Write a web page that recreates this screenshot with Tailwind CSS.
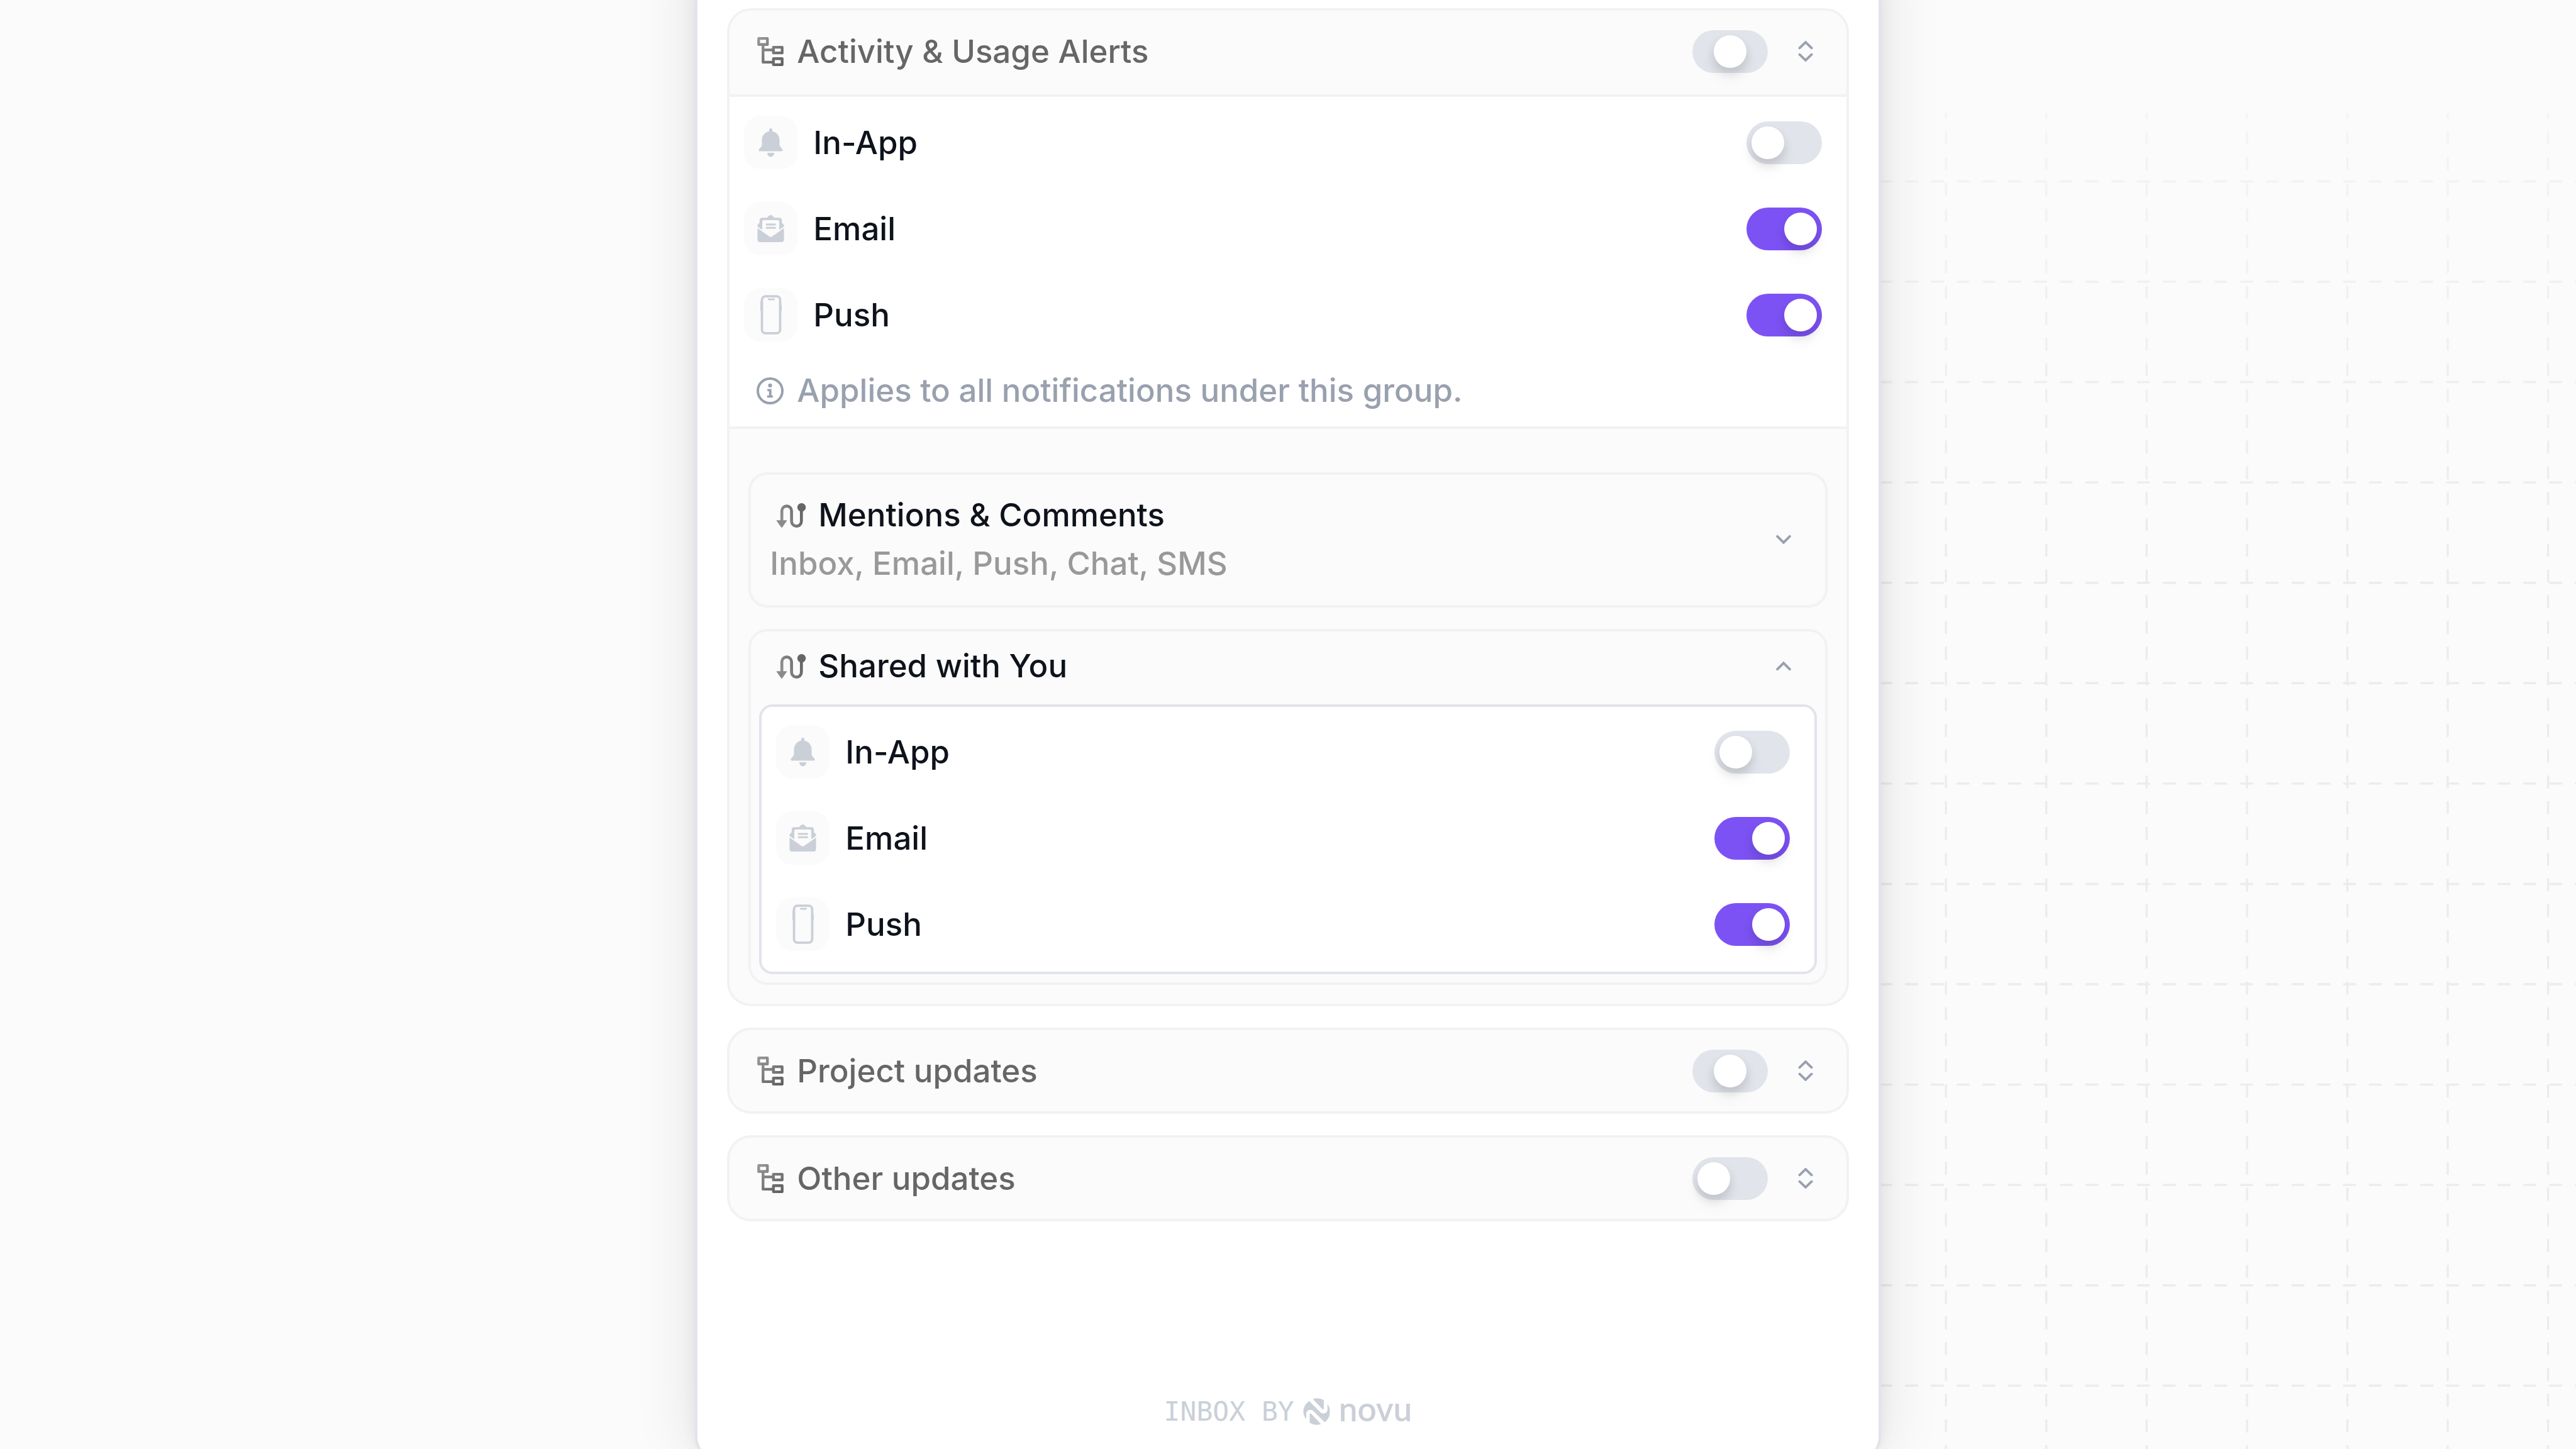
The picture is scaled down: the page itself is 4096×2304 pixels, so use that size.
<!DOCTYPE html>
<html lang="en">
<head>
<meta charset="utf-8">
<meta name="viewport" content="width=device-width, initial-scale=1">
<title>Notification preferences</title>
<script src="https://cdn.jsdelivr.net/npm/@tailwindcss/browser@4"></script>
</head>
<body class="bg-[#fbfbfb]">

<!-- Icon sprite -->
<svg class="absolute size-0" aria-hidden="true">
  <defs>
    <linearGradient id="gray-tree" gradientUnits="userSpaceOnUse" x1="0" y1="0" x2="48" y2="53">
      <stop offset="0" stop-color="#999"/><stop offset="1" stop-color="#5c5c5c"/>
    </linearGradient>
    <linearGradient id="gray-route" gradientUnits="userSpaceOnUse" x1="0" y1="30" x2="56" y2="14">
      <stop offset="0" stop-color="#999"/><stop offset="1" stop-color="#5c5c5c"/>
    </linearGradient>
    <linearGradient id="fade" x1="0" y1="0" x2="0" y2="1">
      <stop offset="0" stop-color="#fff" stop-opacity=".45"/><stop offset=".32" stop-color="#fff"/><stop offset="1" stop-color="#fff"/>
    </linearGradient>
    <mask id="grid-mask" maskUnits="userSpaceOnUse" x="3400" y="210" width="1400" height="2490">
      <rect x="3400" y="210" width="1400" height="2490" fill="url(#fade)"/>
    </mask>
  </defs>
  <symbol id="tree" viewBox="0 0 48 53">
    <g fill="none" stroke="url(#gray-tree)" stroke-width="5" stroke-linejoin="round">
      <path d="M2.500 2.500h16v11h-16zM29.500 18.500h16v10.500h-16zM29.500 39.500h16v11h-16z"/>
      <path d="M10.500 15v31h17M10.500 23.500h17"/>
    </g>
  </symbol>
  <symbol id="route" viewBox="0 0 56 46">
    <path d="M10.500 33V14.500a9.100 9.100 0 0 1 18.200 0V34a9.250 9.250 0 0 0 18.500 0V12" fill="none" stroke="url(#gray-route)" stroke-width="5.500"/>
    <path d="M0 32h20.500L11.500 45q-1.200 1.500-2.400 0z" fill="#8a8a8a"/>
    <circle cx="47.500" cy="8" r="8" fill="#666"/>
  </symbol>
  <symbol id="bell" viewBox="0 0 46 54">
    <path d="M23 0c2 0 3 1.500 3 3v2.500c8 1.500 13.500 8 13.500 16V30c0 3 1.500 5 4.500 8 2.500 2.500 1.500 5-1 5H3c-2.500 0-3.500-2.500-1-5 3-3 4.500-5 4.500-8v-8.500c0-8 5.500-14.500 13.500-16V3c0-1.500 1-3 3-3zM16.500 46h13c0 4.500-3 7.500-6.500 7.500s-6.500-3-6.500-7.500z"/>
  </symbol>
  <symbol id="mail" viewBox="0 0 50 51">
    <path d="M0 24.500 22 40q3 2.500 6 0l22-15.500V46q0 5-5 5H5q-5 0-5-5z"/>
    <path fill-rule="evenodd" d="M25 0c2 0 3 .7 7 5h9q5 0 5 5v4.500l3 3q2 2.500 0 5L41 28V12q0-2.500-2.500-2.500h-27Q9 9.500 9 12v16l-8-5.500q-2-2.500 0-5l3-3V10q0-5 5-5h9c4-4.300 5-5 7-5z"/>
    <path d="M16 16h18.500v3.500H16zM16 22.300h18.500v3.500H16z"/>
  </symbol>
  <symbol id="phone" viewBox="0 0 40 74">
    <rect x="3" y="2.500" width="34" height="69" rx="6.500" fill="none" stroke="currentColor" stroke-width="4.500"/>
    <path d="M0 12h2v18H0zM38 19h2v11h-2zM15 6.500h11q1.500 0 1 1.500 0 1.800-2 1.800h-9q-2 0-2-1.800 0-1.500 1-1.500z"/>
  </symbol>
  <symbol id="info" viewBox="0 0 50 50">
    <circle cx="25" cy="25" r="22.700" fill="none" stroke="currentColor" stroke-width="4.600"/>
    <circle cx="25" cy="15" r="3.600"/>
    <path d="M20 21.500h7.500v12H30v4H19.500v-4h3.500v-8h-3z"/>
  </symbol>
  <symbol id="sort" viewBox="0 0 26 38">
    <path d="M2 13 13 2.500 24 13M2 25l11 10.500L24 25" fill="none" stroke="currentColor" stroke-width="4.500" stroke-linecap="round"/>
  </symbol>
  <symbol id="down" viewBox="0 0 28 18">
    <path d="M2.500 3 14 14.500 25.500 3" fill="none" stroke="currentColor" stroke-width="4.500" stroke-linecap="round"/>
  </symbol>
  <symbol id="up" viewBox="0 0 28 18">
    <path d="M2.500 15 14 3.500 25.500 15" fill="none" stroke="currentColor" stroke-width="4.500" stroke-linecap="round"/>
  </symbol>
  <symbol id="novu" viewBox="0 0 50 51">
    <path d="M17.800 1.700Q28.500-1.800 38.600 4v15.500q-.5 3.500-3 1z"/>
    <path d="M11 5.500 32 26.700c6 5 13.500 1.300 13.500-5.200V11.300Q50 17 50 25.700 50 38 40.500 45.700L19 24.500c-6-5-13.500-1.300-13.500 5.200v10Q0 33 0 25.500 0 13 11 5.500z"/>
    <path d="M11.900 31.200q.5-4 3.200-1.200l18.200 19.300Q22 53 11.900 46.700z"/>
  </symbol>
</svg>

<main class="relative h-screen overflow-hidden font-['Inter',sans-serif] text-[51px] leading-[68px] font-medium text-[#0e121b]">

  <!-- Dashed background grid -->
  <svg class="absolute inset-0 size-full" viewBox="0 0 4800 2700" preserveAspectRatio="none" aria-hidden="true">
    <g id="grid" mask="url(#grid-mask)" stroke="#ececec" stroke-width="4"></g>
  </svg>

  <section class="relative mx-auto -mt-[100px] flex min-h-[calc(100vh+115px)] w-11/24 flex-col rounded-[34px] bg-white px-[47px] pt-[113px] pb-[43px] shadow-[0_0_0_4px_#e1e4ea,0_0_26px_rgba(0,0,0,0.08),0_0_102px_rgba(0,0,0,0.12)]">
    <div class="flex flex-col gap-[34px]">

      <article class="overflow-hidden rounded-[38px] border-4 border-[#f2f2f2] bg-[#fbfbfb]">
        <header class="border-b-4 border-[#f2f2f2] pb-1">
          <div class="flex h-[129px] items-center pr-[53px] pl-[44px] text-[#666]">
            <svg class="mr-[21px] h-[46px] w-[42px]"><use href="#tree"/></svg>
            <h2 class="flex-1"><label for="g1">Activity &amp; Usage Alerts</label></h2>
            <input id="g1" type="checkbox" role="switch" data-mixed class="h-[68px] w-[120px] appearance-none rounded-full bg-[#e1e4ea] p-2 before:block before:size-[52px] before:rounded-full before:bg-white before:shadow-[0_8px_16px_rgba(14,18,27,0.12),0_16px_24px_rgba(14,18,27,0.05)] checked:bg-[#7d52f4] checked:before:ml-[52px] indeterminate:before:ml-[26px]">
            <button type="button" aria-label="Collapse group" class="ml-12 text-[#99a0ae]"><svg class="h-[33px] w-6"><use href="#sort"/></svg></button>
          </div>
        </header>

        <div class="border-b-4 border-[#f2f2f2] bg-white pt-[30px] pr-[39px] pb-[23px] pl-[23px]">
          <ul class="flex flex-col gap-[52px]">
            <li class="flex h-[85px] items-center">
              <span class="mr-[25px] grid size-[85px] place-items-center rounded-[26px] bg-[#fbfbfb] text-[#cacfd8]"><svg class="h-[46px] w-[39px] fill-current"><use href="#bell"/></svg></span>
              <label for="a1" class="flex-1">In-App</label>
              <input id="a1" type="checkbox" role="switch" class="h-[68px] w-[120px] appearance-none rounded-full bg-[#e1e4ea] p-2 before:block before:size-[52px] before:rounded-full before:bg-white before:shadow-[0_8px_16px_rgba(14,18,27,0.12),0_16px_24px_rgba(14,18,27,0.05)] checked:bg-[#7d52f4] checked:before:ml-[52px]">
            </li>
            <li class="flex h-[85px] items-center">
              <span class="mr-[25px] grid size-[85px] place-items-center rounded-[26px] bg-[#fbfbfb] text-[#cacfd8]"><svg class="size-[43px] fill-current"><use href="#mail"/></svg></span>
              <label for="a2" class="flex-1">Email</label>
              <input id="a2" type="checkbox" role="switch" checked class="h-[68px] w-[120px] appearance-none rounded-full bg-[#e1e4ea] p-2 before:block before:size-[52px] before:rounded-full before:bg-white before:shadow-[0_8px_16px_rgba(14,18,27,0.12),0_16px_24px_rgba(14,18,27,0.05)] checked:bg-[#7d52f4] checked:before:ml-[52px]">
            </li>
            <li class="flex h-[85px] items-center">
              <span class="mr-[25px] grid size-[85px] place-items-center rounded-[26px] bg-[#fbfbfb] text-[#cacfd8]"><svg class="h-[63px] w-[34px] fill-current"><use href="#phone"/></svg></span>
              <label for="a3" class="flex-1">Push</label>
              <input id="a3" type="checkbox" role="switch" checked class="h-[68px] w-[120px] appearance-none rounded-full bg-[#e1e4ea] p-2 before:block before:size-[52px] before:rounded-full before:bg-white before:shadow-[0_8px_16px_rgba(14,18,27,0.12),0_16px_24px_rgba(14,18,27,0.05)] checked:bg-[#7d52f4] checked:before:ml-[52px]">
            </li>
          </ul>
          <p class="mt-11 flex items-center gap-[21px] pl-[20px] text-[#99a0ae]">
            <svg class="size-[43px] fill-current"><use href="#info"/></svg>
            Applies to all notifications under this group.
          </p>
        </div>

        <div class="flex flex-col gap-[34px] px-[30px] pt-[69px] pb-[30px]">
          <div class="flex items-center rounded-[30px] border-4 border-[#f2f2f2] pt-[30px] pr-[54px] pb-8 pl-[30px]">
            <div class="flex flex-1 flex-col gap-[9px]">
              <h3 class="flex items-center gap-[19px] pl-[10px]"><svg class="h-[39px] w-12"><use href="#route"/></svg>Mentions &amp; Comments</h3>
              <p class="text-[#999]">Inbox, Email, Push, Chat, SMS</p>
            </div>
            <button type="button" aria-label="Expand Mentions &amp; Comments" class="text-[#99a0ae]"><svg class="h-4 w-6"><use href="#down"/></svg></button>
          </div>

          <div class="rounded-[30px] border-4 border-[#f2f2f2] px-[13px] pt-[21px] pb-[13px]">
            <div class="mb-[27px] flex items-center pr-[41px] pl-[27px]">
              <h3 class="flex flex-1 items-center gap-[19px]"><svg class="h-[39px] w-12"><use href="#route"/></svg>Shared with You</h3>
              <button type="button" aria-label="Collapse Shared with You" class="text-[#99a0ae]"><svg class="h-4 w-6"><use href="#up"/></svg></button>
            </div>
            <ul class="flex flex-col gap-[52px] rounded-[21px] border-4 border-[#e1e4ea] bg-white pt-[29px] pr-[39px] pb-[33px] pl-[23px]">
              <li class="flex h-[85px] items-center">
                <span class="mr-[25px] grid size-[85px] place-items-center rounded-[26px] bg-[#fbfbfb] text-[#cacfd8]"><svg class="h-[46px] w-[39px] fill-current"><use href="#bell"/></svg></span>
                <label for="b1" class="flex-1">In-App</label>
                <input id="b1" type="checkbox" role="switch" class="h-[68px] w-[120px] appearance-none rounded-full bg-[#e1e4ea] p-2 before:block before:size-[52px] before:rounded-full before:bg-white before:shadow-[0_8px_16px_rgba(14,18,27,0.12),0_16px_24px_rgba(14,18,27,0.05)] checked:bg-[#7d52f4] checked:before:ml-[52px]">
              </li>
              <li class="flex h-[85px] items-center">
                <span class="mr-[25px] grid size-[85px] place-items-center rounded-[26px] bg-[#fbfbfb] text-[#cacfd8]"><svg class="size-[43px] fill-current"><use href="#mail"/></svg></span>
                <label for="b2" class="flex-1">Email</label>
                <input id="b2" type="checkbox" role="switch" checked class="h-[68px] w-[120px] appearance-none rounded-full bg-[#e1e4ea] p-2 before:block before:size-[52px] before:rounded-full before:bg-white before:shadow-[0_8px_16px_rgba(14,18,27,0.12),0_16px_24px_rgba(14,18,27,0.05)] checked:bg-[#7d52f4] checked:before:ml-[52px]">
              </li>
              <li class="flex h-[85px] items-center">
                <span class="mr-[25px] grid size-[85px] place-items-center rounded-[26px] bg-[#fbfbfb] text-[#cacfd8]"><svg class="h-[63px] w-[34px] fill-current"><use href="#phone"/></svg></span>
                <label for="b3" class="flex-1">Push</label>
                <input id="b3" type="checkbox" role="switch" checked class="h-[68px] w-[120px] appearance-none rounded-full bg-[#e1e4ea] p-2 before:block before:size-[52px] before:rounded-full before:bg-white before:shadow-[0_8px_16px_rgba(14,18,27,0.12),0_16px_24px_rgba(14,18,27,0.05)] checked:bg-[#7d52f4] checked:before:ml-[52px]">
              </li>
            </ul>
          </div>
        </div>
      </article>

      <article class="rounded-[38px] border-4 border-[#f2f2f2] bg-[#fbfbfb]">
        <div class="flex h-[129px] items-center pr-[53px] pl-[44px] text-[#666]">
          <svg class="mr-[21px] h-[46px] w-[42px]"><use href="#tree"/></svg>
          <h2 class="flex-1"><label for="g2">Project updates</label></h2>
          <input id="g2" type="checkbox" role="switch" data-mixed class="h-[68px] w-[120px] appearance-none rounded-full bg-[#e1e4ea] p-2 before:block before:size-[52px] before:rounded-full before:bg-white before:shadow-[0_8px_16px_rgba(14,18,27,0.12),0_16px_24px_rgba(14,18,27,0.05)] checked:bg-[#7d52f4] checked:before:ml-[52px] indeterminate:before:ml-[26px]">
          <button type="button" aria-label="Expand group" class="ml-12 text-[#99a0ae]"><svg class="h-[33px] w-6"><use href="#sort"/></svg></button>
        </div>
      </article>

      <article class="rounded-[38px] border-4 border-[#f2f2f2] bg-[#fbfbfb]">
        <div class="flex h-[129px] items-center pr-[53px] pl-[44px] text-[#666]">
          <svg class="mr-[21px] h-[46px] w-[42px]"><use href="#tree"/></svg>
          <h2 class="flex-1"><label for="g3">Other updates</label></h2>
          <input id="g3" type="checkbox" role="switch" class="h-[68px] w-[120px] appearance-none rounded-full bg-[#e1e4ea] p-2 before:block before:size-[52px] before:rounded-full before:bg-white before:shadow-[0_8px_16px_rgba(14,18,27,0.12),0_16px_24px_rgba(14,18,27,0.05)] checked:bg-[#7d52f4] checked:before:ml-[52px]">
          <button type="button" aria-label="Expand group" class="ml-12 text-[#99a0ae]"><svg class="h-[33px] w-6"><use href="#sort"/></svg></button>
        </div>
      </article>
    </div>

    <footer class="mt-auto flex h-16 items-center justify-center text-[#cacfd8]">
      <span class="mr-[14px] font-['DejaVu_Sans_Mono',monospace] text-[43px] font-normal">INBOX BY</span>
      <svg class="mr-[14px] size-[43px] fill-current"><use href="#novu"/></svg>
      <span class="pb-2 font-['Lato',sans-serif] text-[53px] font-semibold">novu</span>
    </footer>
  </section>
</main>

<script>
  document.querySelectorAll('[data-mixed]').forEach(function (el) { el.indeterminate = true; });

  // Grid lines: one every 187 units, dashed 24 on / 24 off
  var grid = document.getElementById('grid');
  function line(x1, y1, x2, y2) {
    var l = document.createElementNS('http://www.w3.org/2000/svg', 'line');
    l.setAttribute('x1', x1); l.setAttribute('y1', y1);
    l.setAttribute('x2', x2); l.setAttribute('y2', y2);
    l.setAttribute('stroke-dasharray', '24 24');
    grid.appendChild(l);
  }
  for (var x = 3626; x < 4800; x += 187) line(x, 197, x, 2700);
  for (var y = 338; y < 2700; y += 187) line(3454, y, 4800, y);
</script>
</body>
</html>
